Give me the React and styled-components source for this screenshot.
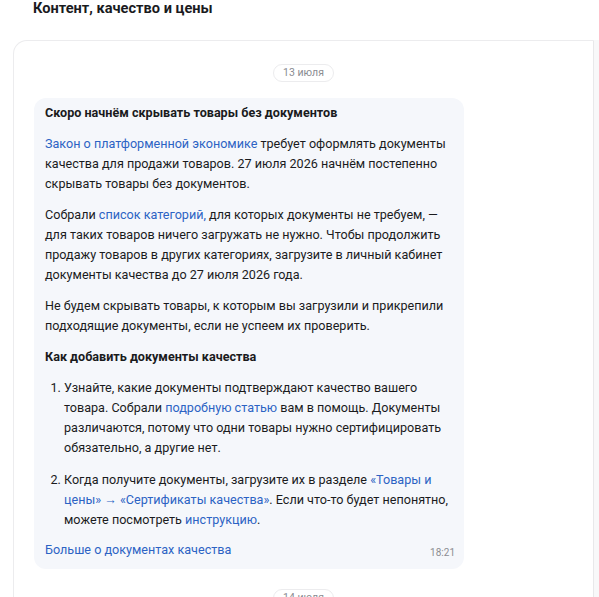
import React from 'react';
import styled, { createGlobalStyle } from 'styled-components';

const GlobalStyle = createGlobalStyle`
  html, body {
    margin: 0;
    padding: 0;
    background: #ffffff;
    overflow: hidden;
  }
  body {
    font-family: Roboto, "Liberation Sans", sans-serif;
    color: #1a1b1d;
  }
`;

const Page = styled.div`
  display: flex;
  flex-direction: column;
  height: 597px;
  overflow: hidden;
`;

const Title = styled.h2`
  flex-shrink: 0;
  margin: 0;
  padding: 0 0 0 33px;
  height: 40px;
  font-size: 14.6px;
  line-height: 16px;
  font-weight: 700;
  color: #1a1b1e;
`;

const Body = styled.div`
  display: flex;
  flex: 1;
  min-height: 0;
  padding-left: 13px;
`;

const Feed = styled.div`
  flex: 1;
  border: 1px solid #ececee;
  border-right: 1px solid #e8e8ea;
  border-bottom: none;
  border-radius: 14px 0 0 0;
  padding: 23px 20px 0 20px;
  display: flex;
  flex-direction: column;
  align-items: flex-start;
  overflow: hidden;
`;

const Aside = styled.div`
  width: 5px;
  background: #f8f8f9;
`;

const DateChip = styled.div`
  flex-shrink: 0;
  align-self: center;
  height: 16px;
  padding: 0 9px;
  border: 1px solid #ececee;
  border-radius: 10px;
  font-size: 10.5px;
  line-height: 16px;
  color: #8a8c91;
  margin-bottom: ${(p) => p.gap || 0}px;
`;

const Bubble = styled.div`
  flex-shrink: 0;
  width: 430px;
  box-sizing: border-box;
  background: #f5f7fb;
  border-radius: 12px;
  padding: 5px 11px 9px 11px;
  font-size: 12.6px;
  line-height: 20px;
  margin-bottom: 20px;
`;

const Heading = styled.div`
  font-weight: 700;
  margin: ${(p) => p.top || 0}px 0 11px;
`;

const Para = styled.p`
  margin: 0 0 11px;
`;

const List = styled.ol`
  margin: 0 0 10px;
  padding-left: 19px;
`;

const Item = styled.li`
  margin-bottom: 12px;
  &:last-child {
    margin-bottom: 0;
  }
`;

const Link = styled.a`
  color: #2c63c4;
  text-decoration: none;
`;

const Footer = styled.div`
  display: flex;
  justify-content: space-between;
  align-items: flex-end;
`;

const Time = styled.span`
  font-size: 10px;
  line-height: 14px;
  color: #8b8d92;
  margin-right: -2px;
`;

export default function App() {
  return (
    <Page>
      <GlobalStyle />
      <Title>Контент, качество и цены</Title>
      <Body>
        <Feed>
          <DateChip gap={16}>13 июля</DateChip>
          <Bubble>
            <Heading>Скоро начнём скрывать товары без документов</Heading>
            <Para>
              <Link href="#">Закон о платформенной экономике</Link> требует оформлять документы
              качества для продажи товаров. 27 июля 2026 начнём постепенно скрывать товары без
              документов.
            </Para>
            <Para>
              Собрали <Link href="#">список категорий,</Link> для которых документы не требуем, —
              для таких товаров ничего загружать не нужно. Чтобы продолжить продажу товаров в
              других категориях, загрузите в личный кабинет документы качества до 27 июля 2026
              года.
            </Para>
            <Para>
              Не будем скрывать товары, к которым вы загрузили и прикрепили подходящие документы,
              если не успеем их проверить.
            </Para>
            <Heading top={11}>Как добавить документы качества</Heading>
            <List>
              <Item>
                Узнайте, какие документы подтверждают качество вашего товара. Собрали{' '}
                <Link href="#">подробную статью</Link> вам в помощь. Документы различаются, потому
                что одни товары нужно сертифицировать обязательно, а другие нет.
              </Item>
              <Item>
                Когда получите документы, загрузите их в разделе{' '}
                <Link href="#">«Товары и цены» → «Сертификаты качества»</Link>. Если что-то будет
                непонятно, можете посмотреть <Link href="#">инструкцию</Link>.
              </Item>
            </List>
            <Footer>
              <Link href="#">Больше о документах качества</Link>
              <Time>18:21</Time>
            </Footer>
          </Bubble>
          <DateChip>14 июля</DateChip>
        </Feed>
        <Aside />
      </Body>
    </Page>
  );
}
